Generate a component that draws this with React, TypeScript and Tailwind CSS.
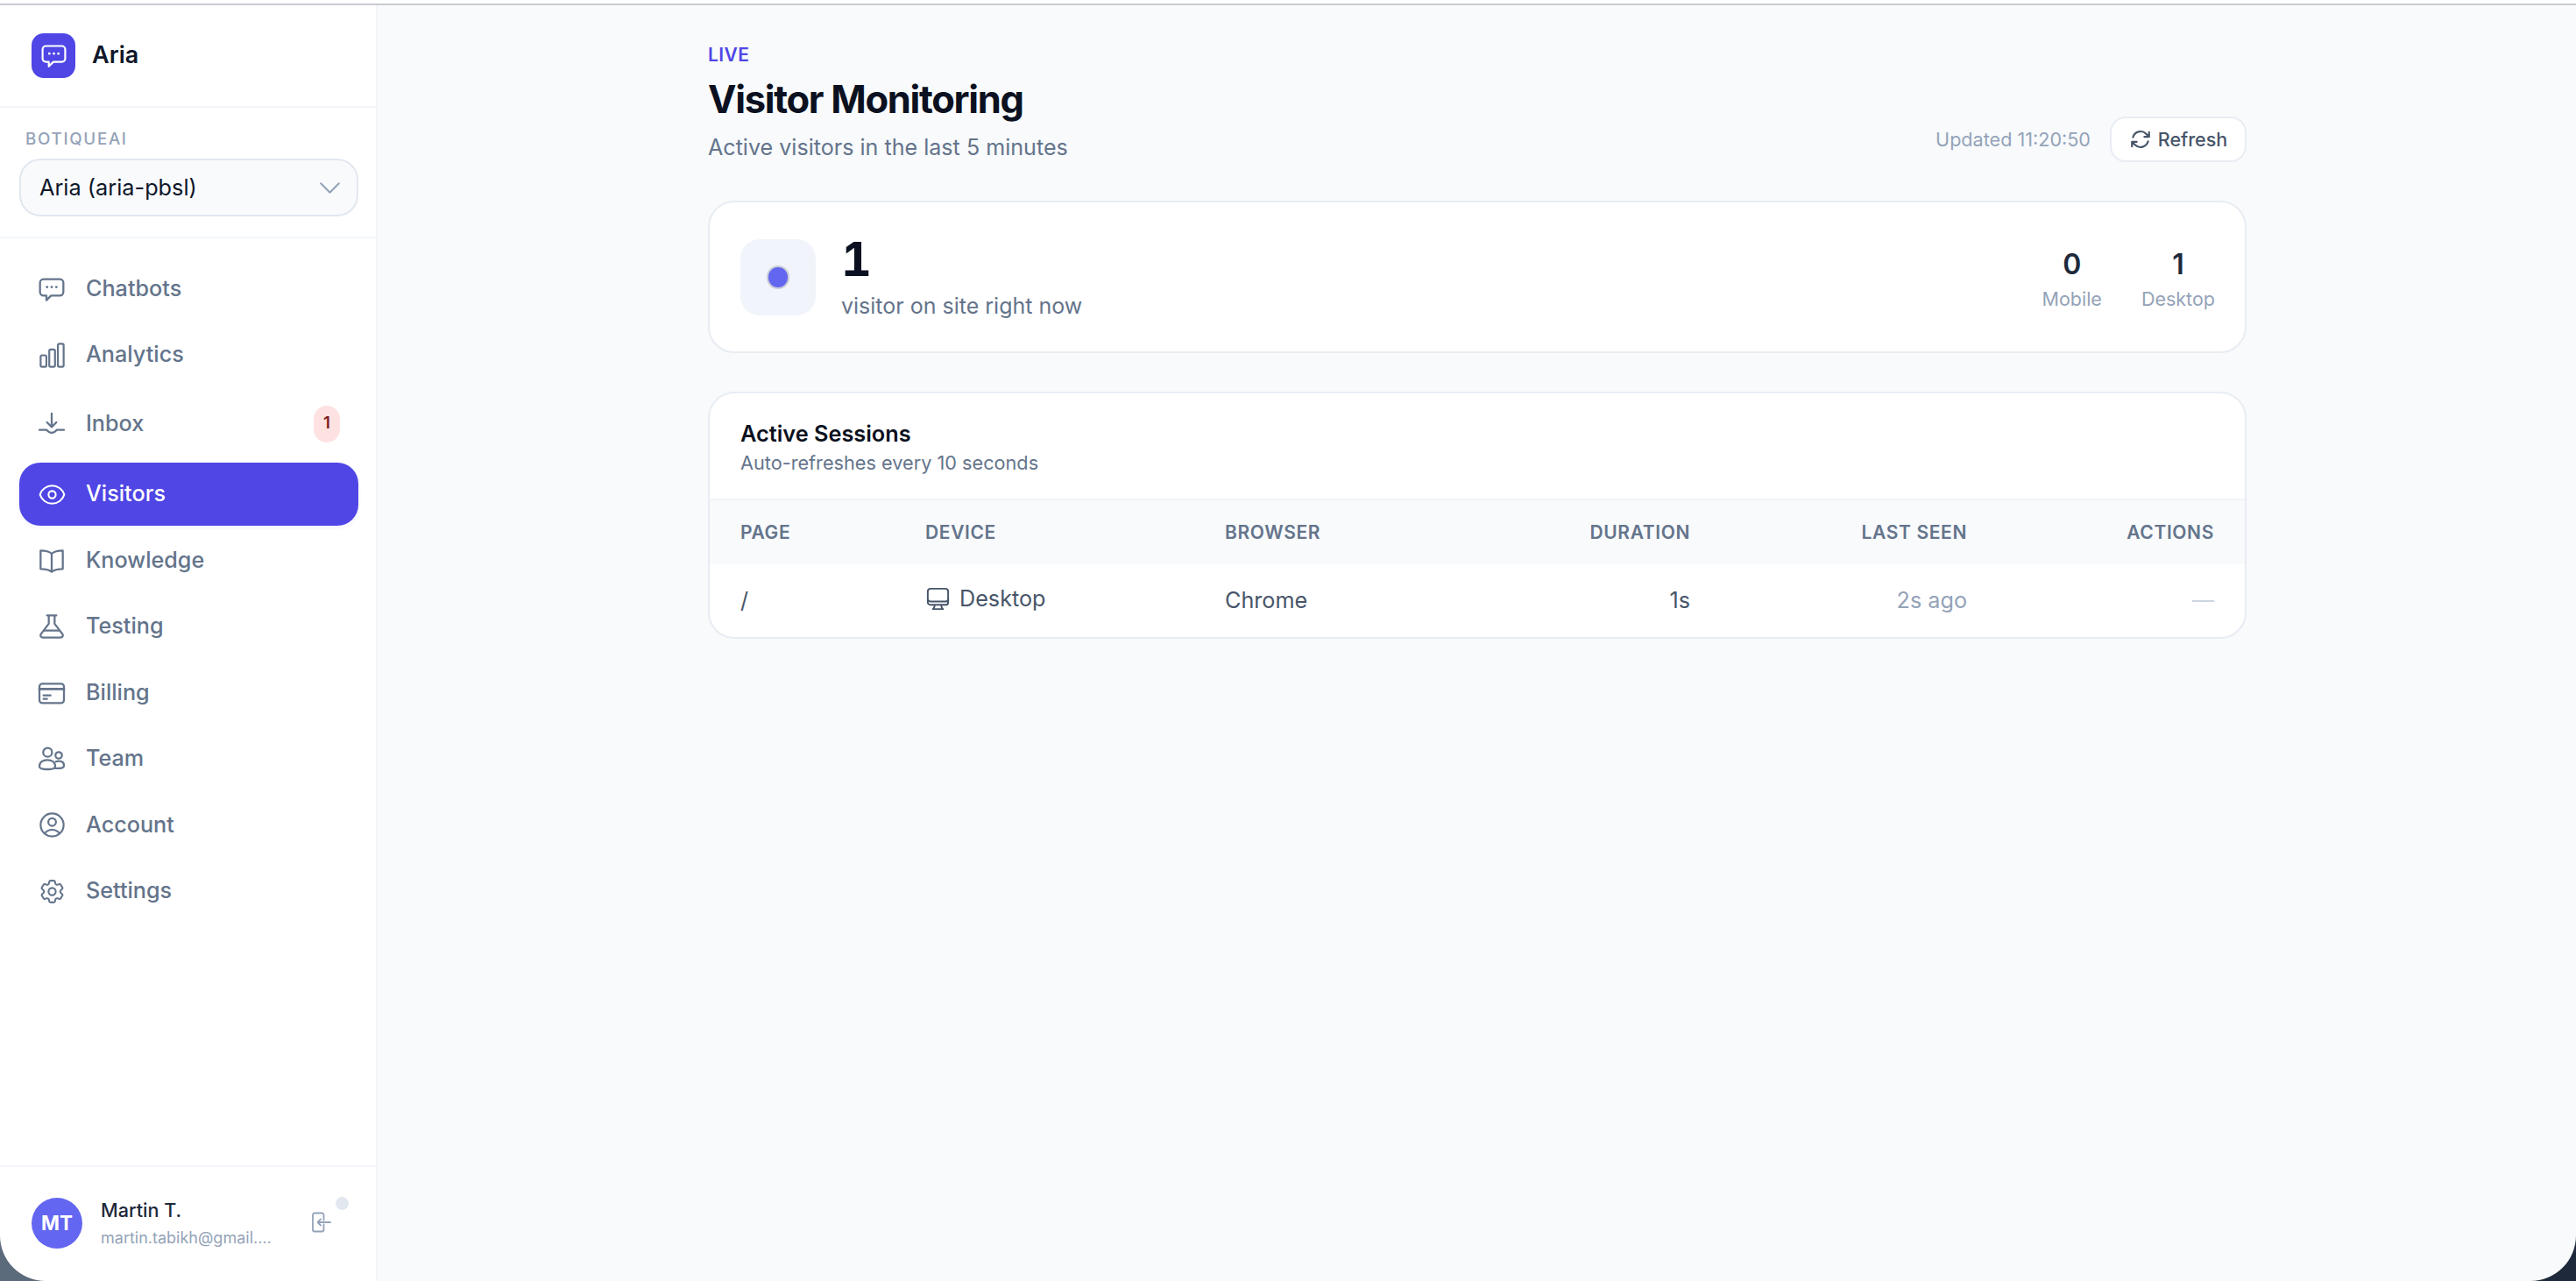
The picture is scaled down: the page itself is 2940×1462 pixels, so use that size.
import React from "react";
import {
  HiOutlineChartBar,
  HiOutlineEye,
  HiOutlineUserCircle,
  HiOutlineCog6Tooth,
  HiOutlineChevronDown,
  HiOutlineComputerDesktop,
  HiOutlineArrowPath,
} from "react-icons/hi2";

type IconProps = { className?: string };

const Svg = ({ className, children }: IconProps & { children: React.ReactNode }) => (
  <svg viewBox="0 0 24 24" fill="none" stroke="currentColor" strokeWidth={1.7} strokeLinecap="round" strokeLinejoin="round" className={className}>
    {children}
  </svg>
);

const ChatIcon = ({ className }: IconProps) => (
  <Svg className={className}>
    <path d="M5 3.500h14a3 3 0 0 1 3 3v8a3 3 0 0 1-3 3h-7.500L7.500 21.500V17.500H5a3 3 0 0 1-3-3v-8a3 3 0 0 1 3-3Z" />
    <path d="M8 10.200h.01M12 10.200h.01M16 10.200h.01" strokeWidth={2.200} />
  </Svg>
);
const InboxIcon = ({ className }: IconProps) => (
  <Svg className={className}>
    <path d="M12 3v11M8 10.500l4 4 4-4" />
    <path d="M1.500 17h6c.8 0 1.200 2.500 4.500 2.500s3.700-2.500 4.500-2.500h6" />
  </Svg>
);
const BookIcon = ({ className }: IconProps) => (
  <Svg className={className}>
    <path d="M12 6c-2-1.800-5-2.700-9.500-2.700V19c4.500 0 7.500.8 9.500 2.500 2-1.700 5-2.500 9.500-2.500V3.300C17 3.300 14 4.200 12 6Z" />
    <path d="M12 6v15" />
  </Svg>
);
const FlaskIcon = ({ className }: IconProps) => (
  <Svg className={className}>
    <path d="M8 2.500h8M9.500 2.500v7.200L2.800 18.500c-1 1.500 0 3 1.800 3h14.800c1.800 0 2.800-1.500 1.800-3L14.500 9.700V2.500" />
    <path d="M5.500 15.500h13" />
  </Svg>
);
const CardIcon = ({ className }: IconProps) => (
  <Svg className={className}>
    <rect x="1.500" y="4" width="21" height="16.500" rx="2.500" />
    <path d="M1.500 8.500h21" strokeWidth={2} />
    <path d="M5 14h6M5 17h3" />
  </Svg>
);
const TeamIcon = ({ className }: IconProps) => (
  <Svg className={className}>
    <circle cx="8.500" cy="6.500" r="3.800" />
    <circle cx="18" cy="9" r="2.800" />
    <path d="M1.500 18.500c0-3.500 3-5.500 6.800-5.500s6.700 2 6.700 5.500c0 2-3 2.500-6.700 2.500S1.500 20.500 1.500 18.500Z" />
    <path d="M15.500 14.500c.8-.4 1.700-.6 2.700-.6 2.600 0 4.300 1.500 4.300 3.800 0 1.700-1.700 2.500-4 2.500h-3.500" />
  </Svg>
);
const LogoutIcon = ({ className }: IconProps) => (
  <svg viewBox="0 0 22 24" fill="none" stroke="currentColor" strokeWidth={1.800} strokeLinecap="round" strokeLinejoin="round" className={className}>
    <path d="M13.500 9.500V3.500a2 2 0 0 0-2-2H3a2 2 0 0 0-2 2v17a2 2 0 0 0 2 2h8.500a2 2 0 0 0 2-2v-6" />
    <path d="M21 12H6.500M10 8.500 6.500 12l3.500 3.500" />
  </svg>
);

const CUSTOM = "w-[32px] h-[32px] shrink-0";
const HERO = "w-[35px] h-[35px] shrink-0";

type NavRow = {
  label: string;
  icon: React.ReactNode;
  rowClass: string;
  active?: boolean;
  badge?: string;
};

const NAV: NavRow[] = [
  { label: "Chatbots", icon: <ChatIcon className={CUSTOM} />, rowClass: "h-[71.75px]" },
  { label: "Analytics", icon: <HiOutlineChartBar className={HERO} />, rowClass: "h-[71.75px]" },
  { label: "Inbox", icon: <InboxIcon className={CUSTOM} />, rowClass: "h-[77px] mb-[2.5px]", badge: "1" },
  { label: "Visitors", icon: <HiOutlineEye className="w-[33px] h-[33px] shrink-0" />, rowClass: "h-[71.75px]", active: true },
  { label: "Knowledge", icon: <BookIcon className={CUSTOM} />, rowClass: "h-[71.75px]" },
  { label: "Testing", icon: <FlaskIcon className={CUSTOM} />, rowClass: "h-[71.75px]" },
  { label: "Billing", icon: <CardIcon className={CUSTOM} />, rowClass: "h-[71.75px]" },
  { label: "Team", icon: <TeamIcon className={CUSTOM} />, rowClass: "h-[71.75px]" },
  { label: "Account", icon: <HiOutlineUserCircle className={HERO} />, rowClass: "h-[71.75px]" },
  { label: "Settings", icon: <HiOutlineCog6Tooth className="w-[33px] h-[33px] shrink-0" />, rowClass: "h-[71.75px]" },
];

function Sidebar() {
  return (
    <aside className="w-[431px] shrink-0 bg-white border-r-[2px] border-[#f1f5f9] flex flex-col">
      <div className="h-[117px] shrink-0 flex items-center gap-[19px] px-[36px] border-b-[2px] border-[#f1f5f9]">
        <div className="w-[50px] h-[51px] rounded-[14px] bg-[#4f46e5] flex items-center justify-center text-white">
          <ChatIcon className="w-[31px] h-[31px]" />
        </div>
        <span className="text-[27px] font-semibold text-[#0f172a]">Aria</span>
      </div>
      <div className="h-[149px] shrink-0 px-[22px] pt-[22px] border-b-[2px] border-[#f1f5f9]">
        <div className="pl-[7px] text-[18.75px] leading-[28px] font-medium tracking-[0.09em] text-[#94a3b8]">BOTIQUEAI</div>
        <div className="mt-[8px] h-[66px] w-[387px] rounded-[24px] border-[2px] border-[#e2e8f0] bg-[#f8fafc] flex items-center justify-between pl-[21px] pr-[14px]">
          <span className="text-[25.3px] text-[#0f172a]">Aria (aria-pbsl)</span>
          <HiOutlineChevronDown className="w-[33px] h-[33px] text-[#94a3b8]" />
        </div>
      </div>
      <nav className="flex flex-col gap-[3.75px] px-[22px] pt-[22px]">
        {NAV.map((n) => (
          <div
            key={n.label}
            className={`${n.rowClass} w-[387px] rounded-[24px] flex items-center pl-[23px] pr-[21px] ${
              n.active ? "bg-[#4f46e5] text-white shadow-[0_2px_4px_rgba(79,70,229,0.08)]" : "text-[#64748b]"
            }`}
          >
            <span className="w-[28px] flex justify-center shrink-0">{n.icon}</span>
            <span className="ml-[25px] text-[25.2px] font-medium flex-1">{n.label}</span>
            {n.badge && (
              <span className="w-[30px] h-[42px] rounded-full bg-[#fee2e2] flex items-center justify-center text-[18.75px] font-semibold text-[#7f1d1d]">
                {n.badge}
              </span>
            )}
          </div>
        ))}
      </nav>
      <div className="mt-auto h-[132px] shrink-0 border-t-[2px] border-[#f1f5f9] flex items-center pl-[36px] relative">
        <div className="w-[58px] h-[58px] rounded-full bg-[#6366f1] flex items-center justify-center text-white text-[22.5px] font-bold -mt-[2px]">
          MT
        </div>
        <div className="ml-[21px] w-[195px] -mt-[3px]">
          <div className="text-[21.6px] leading-[32px] font-medium text-[#1e293b]">Martin T.</div>
          <div className="text-[18px] leading-[28px] text-[#94a3b8] truncate mt-[2px]">martin.tabikh@gmail.com</div>
        </div>
        <LogoutIcon className="ml-[46px] w-[22px] h-[24px] text-[#94a3b8] mt-[-4px]" />
        <span className="absolute left-[383px] top-[34px] w-[15px] h-[15px] rounded-full bg-[#e2e8f0]" />
      </div>
    </aside>
  );
}

function Main() {
  return (
    <main className="flex-1 bg-[#f8fafc]">
      <div className="ml-[377px] w-[1756px] pt-[43px]">
        <div className="flex items-end justify-between">
          <div>
            <div className="text-[21px] leading-[28px] font-semibold tracking-[0.02em] text-[#4f46e5]">LIVE</div>
            <h1 className="mt-[11px] text-[43.5px] leading-[50px] font-bold tracking-[-0.03em] text-[#0b1120]">Visitor Monitoring</h1>
            <p className="mt-[13px] text-[25.1px] leading-[34px] text-[#64748b]">Active visitors in the last 5 minutes</p>
          </div>
          <div className="flex items-center gap-[22px]">
            <span className="text-[21.6px] text-[#94a3b8]">Updated 11:20:50</span>
            <button className="h-[52px] w-[156px] rounded-[18px] border-[2px] border-[#e8ecf3] bg-white flex items-center justify-center gap-[7px] text-[21.5px] font-medium text-[#475569]">
              <HiOutlineArrowPath className="w-[26px] h-[26px] stroke-[2]" />
              Refresh
            </button>
          </div>
        </div>

        <section className="mt-[44px] h-[174px] rounded-[30px] border-[2px] border-[#e8ecf3] bg-white flex items-center pl-[35px] pr-[34px]">
          <div className="w-[86px] h-[87px] rounded-[22px] bg-[#f1f4fb] flex items-center justify-center">
            <span className="w-[26px] h-[27px] rounded-full bg-[#6366f1] border-[2px] border-[#c9ccd6]" />
          </div>
          <div className="ml-[29px] flex-1">
            <div className="text-[54px] leading-[56px] font-bold tabular-nums text-[#0b1120] mt-[3px]">1</div>
            <div className="text-[25px] leading-[36px] text-[#64748b] mt-[7px]">visitor on site right now</div>
          </div>
          <div className="flex gap-[45px] text-center">
            <div>
              <div className="text-[32px] leading-[44px] font-semibold text-[#1e293b] mt-[5px]">0</div>
              <div className="text-[21.5px] leading-[32px] text-[#94a3b8] mt-[1px]">Mobile</div>
            </div>
            <div>
              <div className="text-[32px] leading-[44px] font-semibold text-[#1e293b] mt-[5px]">1</div>
              <div className="text-[21.5px] leading-[32px] text-[#94a3b8] mt-[1px]">Desktop</div>
            </div>
          </div>
        </section>

        <section className="mt-[44px] rounded-[30px] border-[2px] border-[#e8ecf3] bg-white overflow-hidden">
          <div className="h-[122px] pl-[35px] pt-[29px] border-b-[2px] border-[#f1f5f9]">
            <div className="text-[25.3px] leading-[34px] font-semibold text-[#0b1120]">Active Sessions</div>
            <div className="text-[21.7px] leading-[32px] text-[#64748b]">Auto-refreshes every 10 seconds</div>
          </div>
          <table className="w-full table-fixed">
            <colgroup>
              <col className="w-[211px]" />
              <col className="w-[342px]" />
              <col className="w-[300px]" />
              <col className="w-[301px]" />
              <col className="w-[316px]" />
              <col />
            </colgroup>
            <thead>
              <tr className="h-[73px] bg-[#f8fafc] text-[21px] font-semibold tracking-[0.03em] text-[#64748b]">
                <th className="pl-[35px] text-left font-semibold">PAGE</th>
                <th className="pl-[35px] text-left font-semibold">DEVICE</th>
                <th className="pl-[35px] text-left font-semibold">BROWSER</th>
                <th className="pr-[35px] text-right font-semibold">DURATION</th>
                <th className="pr-[35px] text-right font-semibold">LAST SEEN</th>
                <th className="pr-[35px] text-right font-semibold">ACTIONS</th>
              </tr>
            </thead>
            <tbody>
              <tr className="h-[83px] text-[25.2px] text-[#475569]">
                <td className="pl-[35px]">/</td>
                <td className="pl-[35px]">
                  <span className="flex items-center gap-[9px] -mt-[4px] -ml-[1px]">
                    <HiOutlineComputerDesktop className="w-[31px] h-[31px]" />
                    Desktop
                  </span>
                </td>
                <td className="pl-[35px]">Chrome</td>
                <td className="pr-[35px] text-right">1s</td>
                <td className="pr-[35px] text-right text-[#94a3b8]">2s ago</td>
                <td className="pr-[35px] text-right text-[#cbd5e1]">—</td>
              </tr>
            </tbody>
          </table>
        </section>
      </div>
    </main>
  );
}

export default function App() {
  return (
    <div className="w-[2940px] h-[1462px] overflow-hidden bg-gradient-to-r from-[#5c6b7c] via-[#2a3648] to-[#1e293b] flex flex-col font-['Inter',sans-serif]">
      <div className="h-[4px] bg-white shrink-0" />
      <div className="h-[2px] bg-[#c9cbd0] shrink-0" />
      <div className="flex-1 min-h-0 flex rounded-b-[52px] overflow-hidden">
        <Sidebar />
        <Main />
      </div>
    </div>
  );
}
